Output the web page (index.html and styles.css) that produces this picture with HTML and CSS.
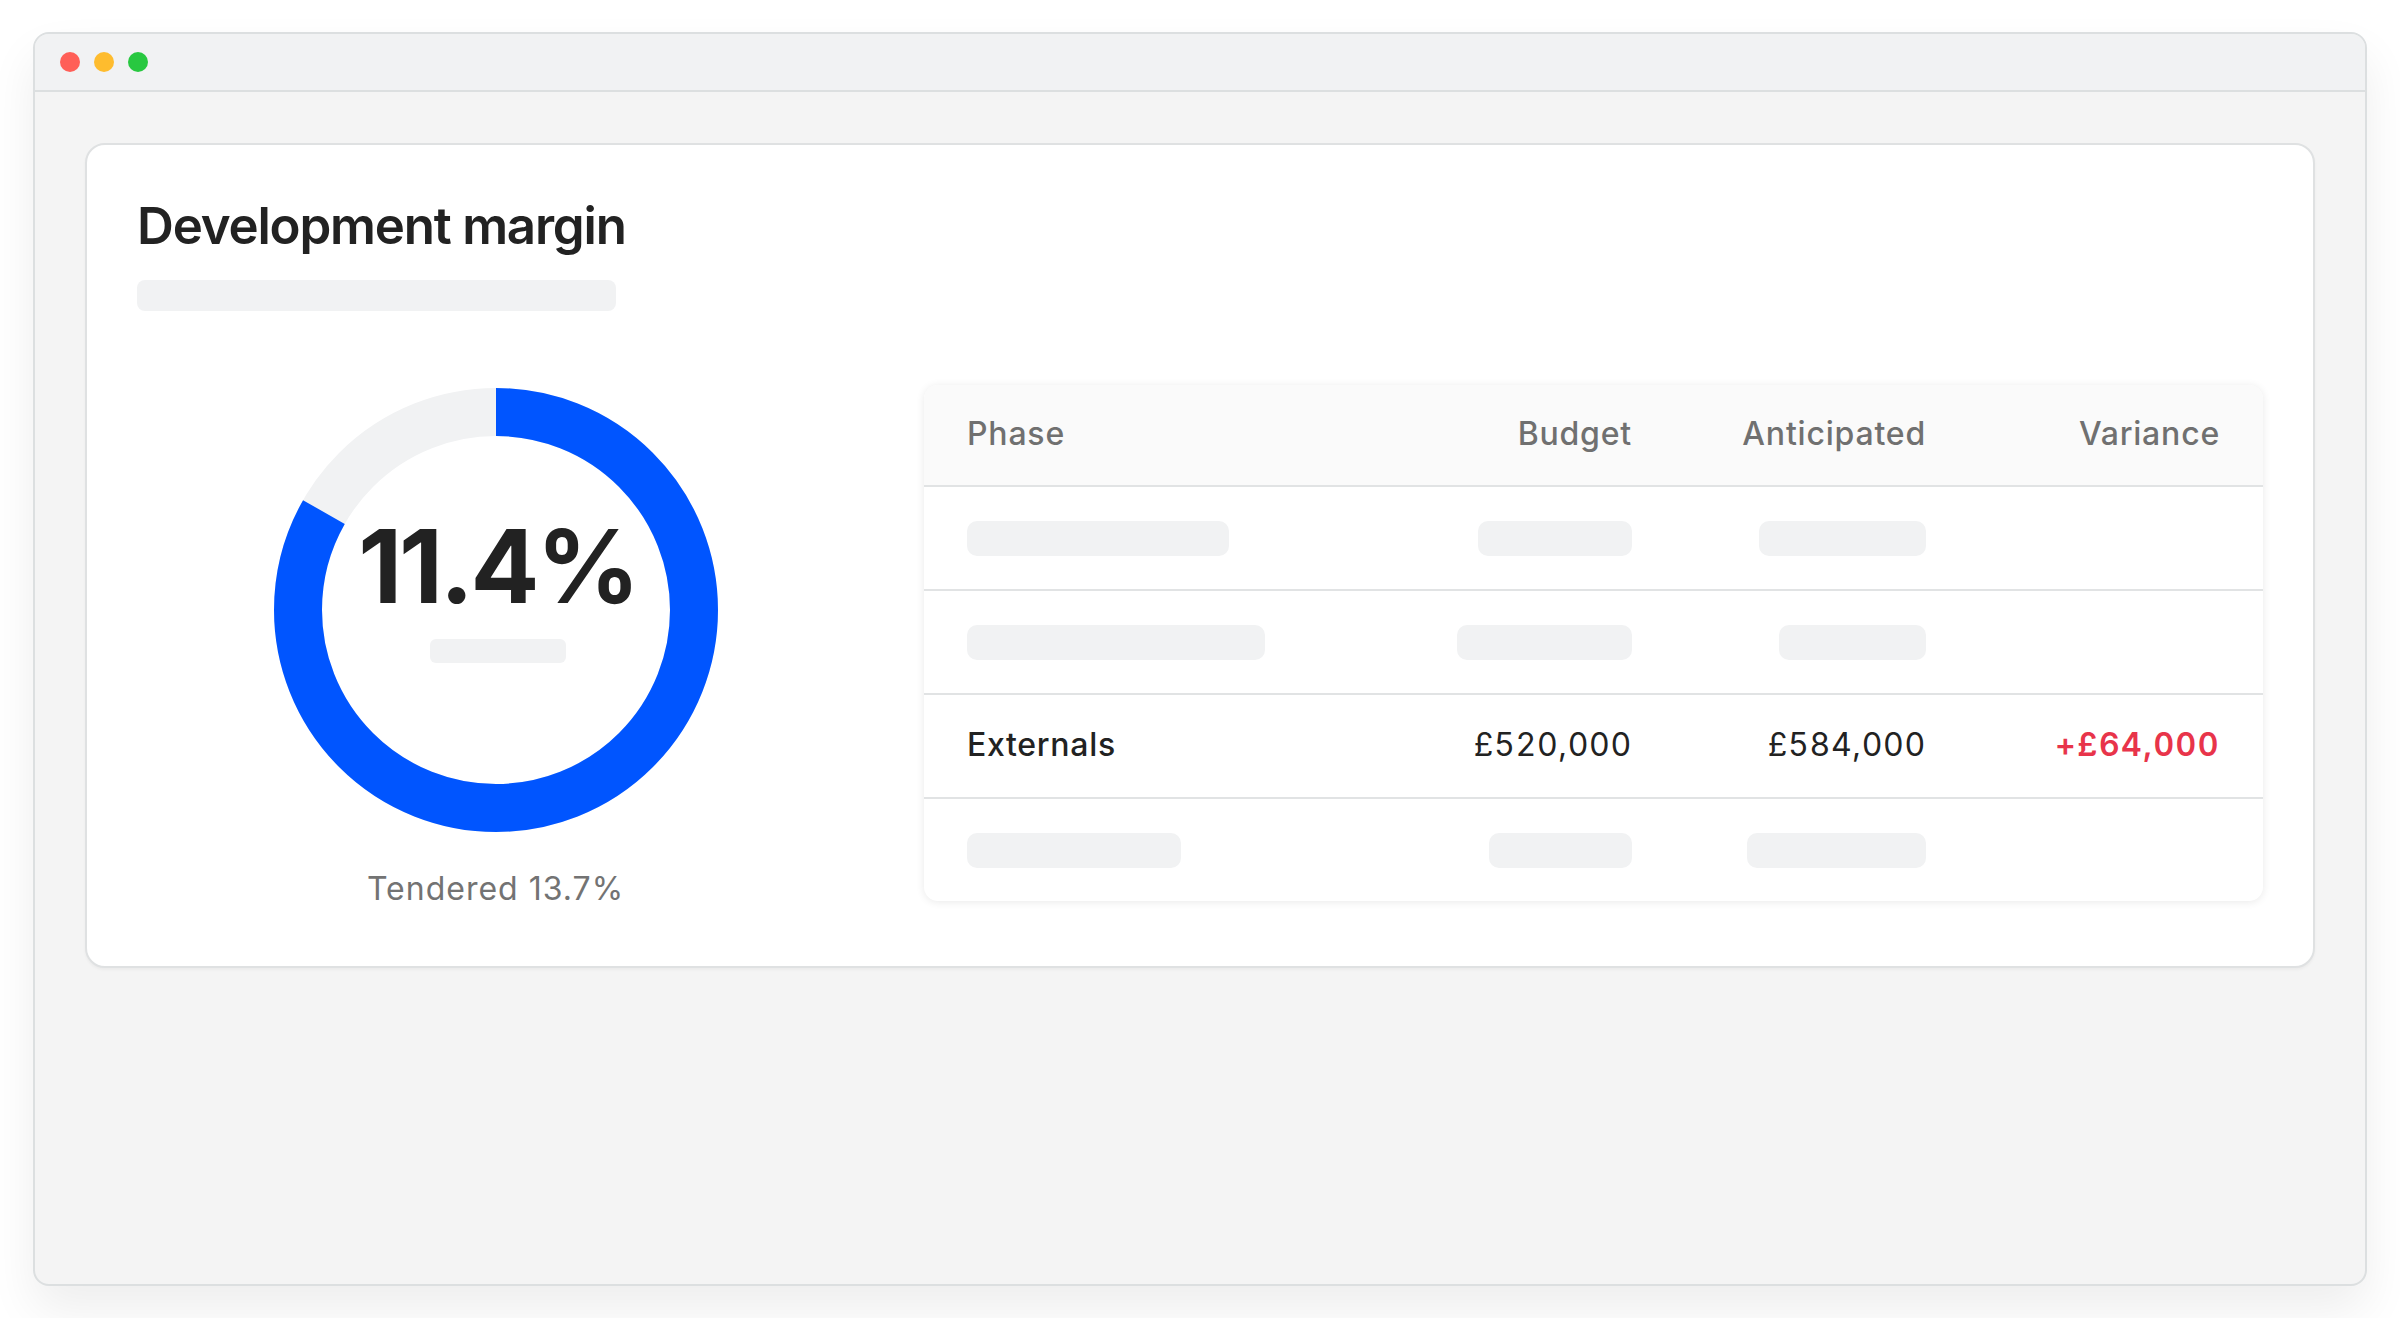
FILE: index.html
```html
<!DOCTYPE html>
<html lang="en">

<head>
  <meta charset="UTF-8" />
  <meta name="viewport" content="width=device-width, initial-scale=1" />
  <title>Development margin</title>
  <link rel="stylesheet" href="styles.css">
</head>

<body>
  <div class="window">
    <div class="titlebar">
      <span class="dot dot-red"></span>
      <span class="dot dot-yellow"></span>
      <span class="dot dot-green"></span>
    </div>

    <main class="content">
      <section class="card">
        <h1 class="card-title">Development margin</h1>
        <div class="skeleton skeleton-subtitle"></div>

        <div class="margin-body">
          <!-- donut: blue arc = anticipated / tendered -->
          <div class="gauge">
            <div class="donut">
              <svg class="donut-ring" width="444" height="444" viewBox="0 0 444 444">
                <circle cx="222" cy="222" r="198" fill="none" stroke="#f1f2f3" stroke-width="48" />
                <circle cx="222" cy="222" r="198" fill="none" stroke="#0055ff" stroke-width="48"
                  stroke-dasharray="1035.1 1244.1" transform="rotate(-90 222 222)" />
              </svg>
              <div class="donut-label">
                <span class="donut-value">11.4%</span>
                <span class="skeleton skeleton-caption"></span>
              </div>
            </div>
            <p class="gauge-note">Tendered 13.7%</p>
          </div>

          <div class="phase-table">
            <div class="row row-head">
              <span>Phase</span>
              <span class="num">Budget</span>
              <span class="num">Anticipated</span>
              <span class="num">Variance</span>
            </div>
            <div class="row">
              <span class="skeleton sk-262"></span>
              <span class="skeleton sk-154 num"></span>
              <span class="skeleton sk-167 num"></span>
              <span></span>
            </div>
            <div class="row">
              <span class="skeleton sk-298"></span>
              <span class="skeleton sk-175 num"></span>
              <span class="skeleton sk-147 num"></span>
              <span></span>
            </div>
            <div class="row">
              <span class="phase-name">Externals</span>
              <span class="num">£520,000</span>
              <span class="num">£584,000</span>
              <span class="num over">+£64,000</span>
            </div>
            <div class="row">
              <span class="skeleton sk-214"></span>
              <span class="skeleton sk-143 num"></span>
              <span class="skeleton sk-179 num"></span>
              <span></span>
            </div>
          </div>
        </div>
      </section>
    </main>
  </div>
</body>

</html>
```

FILE: styles.css
```css
* {
  box-sizing: border-box;
}

body {
  margin: 0;
  font-family: Inter, "Noto Sans", sans-serif;
  background-color: #ffffff;
  color: #222222;
}

.window {
  margin: 32px 33px;
  height: 1254px;
  background-color: #f4f4f4;
  border: 2px solid #dcdfe0;
  border-radius: 16px;
  overflow: hidden;
  box-shadow: 0 24px 48px rgba(0, 0, 0, 0.07);
}

.titlebar {
  height: 58px;
  background-color: #f1f2f3;
  border-bottom: 2px solid #dcdfe0;
  display: flex;
  align-items: center;
  gap: 14px;
  padding-left: 25px;
}

.dot {
  width: 20px;
  height: 20px;
  border-radius: 50%;
}

.dot-red {
  background-color: #ff5f57;
}

.dot-yellow {
  background-color: #febc2e;
}

.dot-green {
  background-color: #28c840;
}

.content {
  padding: 51px 50px;
}

.card {
  background-color: #ffffff;
  border: 2px solid #dfe1e2;
  border-radius: 20px;
  padding: 50px 50px 57px;
  box-shadow: 0 2px 3px rgba(0, 0, 0, 0.04);
}

.card-title {
  margin: 0;
  font-size: 51px;
  font-weight: 600;
  line-height: 1.22;
  letter-spacing: -1.2px;
  color: #222222;
}

.skeleton {
  display: block;
  background-color: #f1f2f3;
  border-radius: 10px;
}

.skeleton-subtitle {
  width: 479px;
  height: 31px;
  margin-top: 23px;
  border-radius: 8px;
}

.margin-body {
  display: grid;
  grid-template-columns: 717px 1fr;
  gap: 70px;
  margin-top: 74px;
}

/* left: donut gauge */
.gauge {
  display: flex;
  flex-direction: column;
  align-items: center;
  padding-top: 3px;
}

.donut {
  display: grid;
  width: 444px;
  height: 444px;
}

.donut-ring,
.donut-label {
  grid-area: 1 / 1;
}

.donut-label {
  display: flex;
  flex-direction: column;
  align-items: center;
  justify-content: center;
  gap: 22px;
  padding-bottom: 43px;
  padding-left: 4px;
}

.donut-value {
  font-size: 102px;
  font-weight: 700;
  line-height: 1;
  letter-spacing: -3.2px;
  color: #222222;
}

.skeleton-caption {
  width: 136px;
  height: 24px;
  border-radius: 6px;
}

.gauge-note {
  margin: 38px 0 0;
  font-size: 32px;
  line-height: 1.2;
  letter-spacing: 1px;
  color: #737373;
}

/* right: phase table */
.phase-table {
  align-self: start;
  background-color: #ffffff;
  border-radius: 14px;
  overflow: hidden;
  box-shadow: 0 1px 8px rgba(0, 0, 0, 0.09);
}

.row {
  display: grid;
  grid-template-columns: 1fr 294px 294px 294px;
  align-items: center;
  height: 104px;
  padding: 0 43px 4px;
  border-top: 2px solid #e1e3e4;
  font-size: 32px;
  letter-spacing: 0.7px;
  font-feature-settings: "tnum";
}

.row-head {
  height: 100px;
  border-top: none;
  background-color: #fafafa;
  color: #707070;
  font-weight: 500;
  letter-spacing: 0.8px;
}

.num {
  justify-self: end;
  text-align: right;
}

.phase-name {
  font-weight: 500;
}

.over {
  color: #e8344a;
  font-weight: 600;
  letter-spacing: 1.5px;
}

.row .skeleton {
  height: 35px;
  margin-top: 4px;
}

.sk-262 { width: 262px; }
.sk-154 { width: 154px; }
.sk-167 { width: 167px; }
.sk-298 { width: 298px; }
.sk-175 { width: 175px; }
.sk-147 { width: 147px; }
.sk-214 { width: 214px; }
.sk-143 { width: 143px; }
.sk-179 { width: 179px; }
```
